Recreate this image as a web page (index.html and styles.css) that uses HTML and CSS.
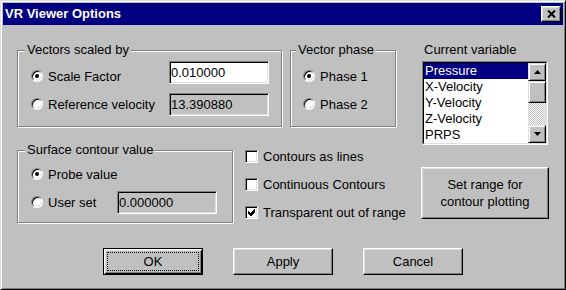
FILE: index.html
```html
<!DOCTYPE html>
<html lang="en">
<head>
    <meta charset="UTF-8">
    <title>VR Viewer Options</title>
    <link rel="stylesheet" href="styles.css">
</head>
<body>
    <div class="dialog">
        <div class="titlebar">
            <span class="title">VR Viewer Options</span>
            <span class="close-btn">
                <svg width="9" height="8" viewBox="0 0 9 8"><path d="M1 0.5 L8 7.5 M8 0.5 L1 7.5" stroke="#000" stroke-width="2"/></svg>
            </span>
        </div>

        <div class="dialog-body">
            <div class="row row-top">
                <fieldset class="group group-vectors">
                    <legend>Vectors scaled by</legend>
                    <div class="group-cols">
                        <div class="opt-col">
                            <div class="opt"><span class="radio checked"></span>Scale Factor</div>
                            <div class="opt"><span class="radio"></span>Reference velocity</div>
                        </div>
                        <div class="field-col">
                            <div class="field">0.010000</div>
                            <div class="field disabled">13.390880</div>
                        </div>
                    </div>
                </fieldset>

                <fieldset class="group group-phase">
                    <legend>Vector phase</legend>
                    <div class="opt-col">
                        <div class="opt"><span class="radio checked"></span>Phase 1</div>
                        <div class="opt"><span class="radio"></span>Phase 2</div>
                    </div>
                </fieldset>

                <div class="var-col">
                    <div class="var-label">Current variable</div>
                    <div class="listbox">
                        <div class="listbox-inner">
                            <ul class="list-items">
                                <li class="selected">Pressure</li>
                                <li>X-Velocity</li>
                                <li>Y-Velocity</li>
                                <li>Z-Velocity</li>
                                <li>PRPS</li>
                            </ul>
                            <div class="scrollbar">
                                <span class="sb-btn"><svg width="7" height="4" viewBox="0 0 7 4"><path d="M0 4 H7 L3.5 0 Z" fill="#000"/></svg></span>
                                <span class="sb-thumb"></span>
                                <span class="sb-track"></span>
                                <span class="sb-btn"><svg width="7" height="4" viewBox="0 0 7 4"><path d="M0 0 H7 L3.5 4 Z" fill="#000"/></svg></span>
                            </div>
                        </div>
                    </div>
                </div>
            </div>

            <div class="row row-mid">
                <fieldset class="group group-surface">
                    <legend>Surface contour value</legend>
                    <div class="surface-rows">
                        <div class="opt"><span class="radio checked"></span>Probe value</div>
                        <div class="opt"><span class="radio"></span>User set<div class="field disabled">0.000000</div></div>
                    </div>
                </fieldset>

                <div class="check-col">
                    <div class="check-row"><span class="checkbox"></span>Contours as lines</div>
                    <div class="check-row"><span class="checkbox"></span>Continuous Contours</div>
                    <div class="check-row">
                        <span class="checkbox"><svg width="7" height="7" viewBox="0 0 7 7" shape-rendering="crispEdges"><path d="M0 2 L2 4 L6 0 L7 0 L7 3 L3 7 L2 7 L0 5 Z" fill="#000"/></svg></span>Transparent out of range
                    </div>
                </div>

                <div class="btn btn-range">Set range for<br>contour plotting</div>
            </div>

            <div class="row row-buttons">
                <div class="btn btn-default"><span class="focus-ring">OK</span></div>
                <div class="btn">Apply</div>
                <div class="btn">Cancel</div>
            </div>
        </div>
    </div>
</body>
</html>
```

FILE: styles.css
```css
body {
    margin: 0;
    font-family: "Liberation Sans", Arial, sans-serif;
    font-size: 13px;
    color: #000;
    background: #c0c0c0;
}
.dialog {
    box-sizing: border-box;
    width: 566px;
    height: 290px;
    padding: 2px;
    background: #c0c0c0;
    border: 1px solid;
    border-color: #dfdfdf #000 #000 #dfdfdf;
    box-shadow: inset 1px 1px #fff, inset -1px -1px #808080;
}
.titlebar {
    display: flex;
    align-items: center;
    justify-content: space-between;
    height: 22px;
    padding: 0 2px;
    background: #000080;
    color: #fff;
}
.title {
    font-weight: bold;
    line-height: 16px;
}
.close-btn {
    box-sizing: border-box;
    width: 20px;
    height: 16px;
    display: flex;
    align-items: center;
    justify-content: center;
    background: #c0c0c0;
    border: 1px solid;
    border-color: #fff #000 #000 #fff;
    box-shadow: inset -1px -1px #808080, inset 1px 1px #dfdfdf;
}
.dialog-body {
    padding: 17px 0 0 14px;
}
.row {
    display: flex;
}
.row-top {
    height: 85px;
}

/* etched group boxes */
.group {
    box-sizing: border-box;
    margin: 0;
    padding: 0;
    min-width: 0;
    border: 1px solid #808080;
    box-shadow: inset 1px 1px #fff, 1px 1px #fff;
}
.group legend {
    margin-left: 7px;
    padding: 0 2px;
    line-height: 16px;
    background: #c0c0c0;
}
.group-vectors {
    width: 265px;
    height: 85px;
}
.group-phase {
    width: 106px;
    height: 85px;
    margin-left: 8px;
}
.group-phase legend {
    margin-left: 5px;
}
.group-surface {
    width: 216px;
    height: 81px;
}
.group-cols {
    display: flex;
    justify-content: space-between;
    padding: 0 12px 0 13px;
}
.group-phase .opt-col {
    padding-left: 12px;
}
.surface-rows {
    padding: 2px 15px 0 13px;
}
.opt-col {
    padding-top: 4px;
}
.opt {
    display: flex;
    align-items: center;
    height: 28px;
    white-space: nowrap;
}
.field-col {
    display: flex;
    flex-direction: column;
    gap: 9px;
    padding-top: 3px;
}
.field {
    box-sizing: border-box;
    width: 100px;
    height: 23px;
    padding-left: 1px;
    line-height: 21px;
    background: #fff;
    border: 1px solid;
    border-color: #808080 #fff #fff #808080;
    box-shadow: inset 1px 1px #000, inset -1px -1px #dfdfdf;
}
.field.disabled {
    background: #c0c0c0;
}
.opt .field {
    margin-left: auto;
}

/* radio and check marks */
.radio {
    position: relative;
    box-sizing: border-box;
    flex: none;
    width: 12px;
    height: 12px;
    margin-right: 5px;
    border-radius: 50%;
    background: #fff;
    border: 1px solid;
    border-color: #808080 #fff #fff #808080;
    box-shadow: inset 1px 1px #000, inset -1px -1px #dfdfdf;
}
.radio.checked::after {
    content: '';
    position: absolute;
    top: 3px;
    left: 3px;
    width: 4px;
    height: 4px;
    border-radius: 50%;
    background: #000;
}
.checkbox {
    box-sizing: border-box;
    flex: none;
    width: 13px;
    height: 13px;
    margin-right: 5px;
    display: flex;
    align-items: center;
    justify-content: center;
    background: #fff;
    border: 1px solid;
    border-color: #808080 #fff #fff #808080;
    box-shadow: inset 1px 1px #000, inset -1px -1px #dfdfdf;
}

/* current variable list */
.var-col {
    width: 126px;
    margin-left: 26px;
}
.var-label {
    line-height: 16px;
    padding-left: 2px;
}
.listbox {
    margin-top: 3px;
    height: 84px;
    box-sizing: border-box;
    border: 1px solid;
    border-color: #808080 #fff #fff #808080;
}
.listbox-inner {
    display: flex;
    height: 100%;
    box-sizing: border-box;
    border: 1px solid;
    border-color: #000 #dfdfdf #dfdfdf #000;
    background: #fff;
    overflow: hidden;
}
.list-items {
    flex: 1;
    margin: 0;
    padding: 0;
    list-style: none;
}
.list-items li {
    line-height: 16px;
    padding-left: 1px;
}
.list-items li.selected {
    background: #000080;
    color: #fff;
}
.scrollbar {
    display: flex;
    flex-direction: column;
    width: 18px;
}
.sb-btn,
.sb-thumb {
    box-sizing: border-box;
    display: flex;
    align-items: center;
    justify-content: center;
    background: #c0c0c0;
    border: 1px solid;
    border-color: #dfdfdf #000 #000 #dfdfdf;
    box-shadow: inset 1px 1px #fff, inset -1px -1px #808080;
}
.sb-btn {
    height: 18px;
}
.sb-thumb {
    height: 22px;
}
.sb-track {
    flex: 1;
    background: repeating-conic-gradient(#c0c0c0 0 25%, #fff 0 50%) 0 0 / 2px 2px;
}

/* middle row */
.row-mid {
    margin-top: 15px;
}
.check-col {
    width: 176px;
    margin-left: 12px;
}
.check-row {
    display: flex;
    align-items: center;
    height: 28px;
    white-space: nowrap;
}

/* push buttons */
.btn {
    box-sizing: border-box;
    width: 100px;
    height: 27px;
    display: flex;
    align-items: center;
    justify-content: center;
    text-align: center;
    background: #c0c0c0;
    border: 1px solid;
    border-color: #fff #000 #000 #fff;
    box-shadow: inset -1px -1px #808080, inset 1px 1px #dfdfdf;
}
.btn-range {
    width: 128px;
    height: 52px;
    margin-top: 25px;
    line-height: 17px;
}
.row-buttons {
    margin-top: 22px;
    padding-left: 86px;
    gap: 30px;
}
.btn-default {
    padding: 3px;
    border-color: #000;
    box-shadow: inset 1px 1px #fff, inset -1px -1px #000, inset 2px 2px #dfdfdf, inset -2px -2px #808080;
}
.focus-ring {
    flex: 1;
    align-self: stretch;
    display: flex;
    align-items: center;
    justify-content: center;
    border: 1px dotted #000;
}
```
